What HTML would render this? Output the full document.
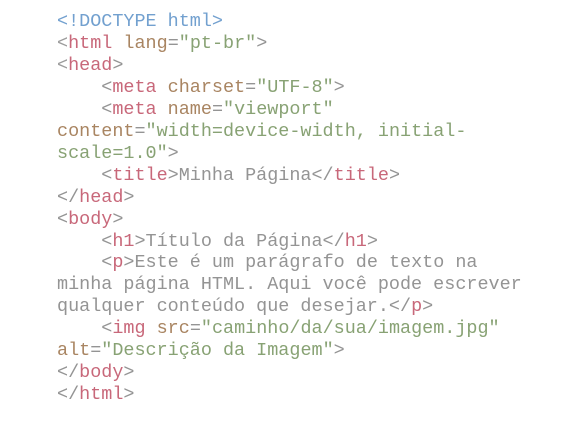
<!DOCTYPE html>
<html><head><meta charset="utf-8"><style>
body{margin:0;background:#fff;width:583px;height:428px;overflow:hidden}
pre{margin:0;position:absolute;left:57px;top:11px;font-family:"Liberation Mono",monospace;font-size:18.45px;line-height:21.95px;color:#949494;white-space:pre}
.t{color:#c8687a}.a{color:#a98562}.v{color:#88a274}.d{color:#72a0cf}.p{color:#9c9c9c}
</style></head><body><pre><span class="d">&lt;!DOCTYPE html&gt;</span>
<span class="p">&lt;</span><span class="t">html</span> <span class="a">lang</span>=<span class="v">"pt-br"</span>&gt;
<span class="p">&lt;</span><span class="t">head</span>&gt;
    &lt;<span class="t">meta</span> <span class="a">charset</span>=<span class="v">"UTF-8"</span>&gt;
    &lt;<span class="t">meta</span> <span class="a">name</span>=<span class="v">"viewport"</span>
<span class="a">content</span>=<span class="v">"width=device-width, initial-</span>
<span class="v">scale=1.0"</span>&gt;
    &lt;<span class="t">title</span>&gt;Minha Página&lt;/<span class="t">title</span>&gt;
&lt;/<span class="t">head</span>&gt;
&lt;<span class="t">body</span>&gt;
    &lt;<span class="t">h1</span>&gt;Título da Página&lt;/<span class="t">h1</span>&gt;
    &lt;<span class="t">p</span>&gt;Este é um parágrafo de texto na
minha página HTML. Aqui você pode escrever
qualquer conteúdo que desejar.&lt;/<span class="t">p</span>&gt;
    &lt;<span class="t">img</span> <span class="a">src</span>=<span class="v">"caminho/da/sua/imagem.jpg"</span>
<span class="a">alt</span>=<span class="v">"Descrição da Imagem"</span>&gt;
&lt;/<span class="t">body</span>&gt;
&lt;/<span class="t">html</span>&gt;</pre></body></html>
